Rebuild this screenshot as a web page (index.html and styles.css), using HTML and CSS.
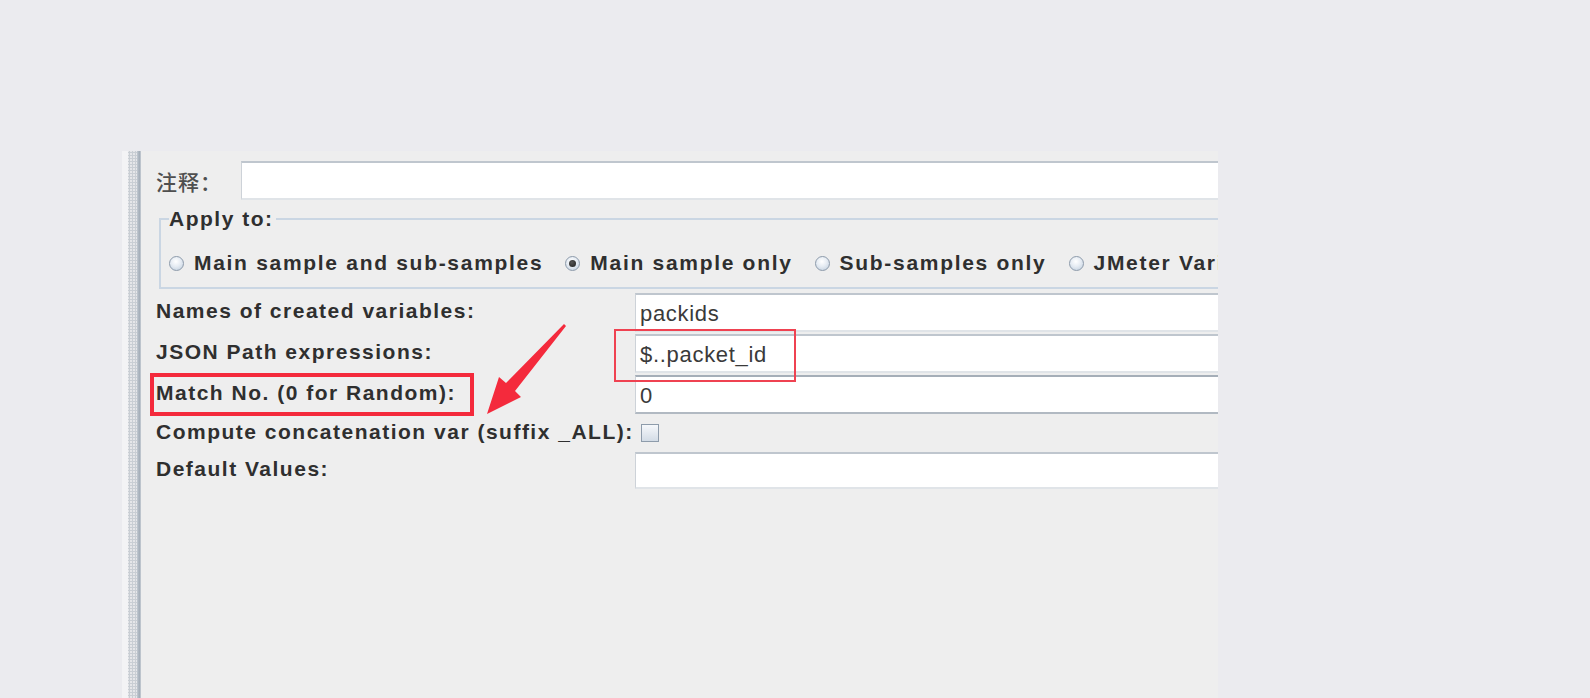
FILE: index.html
```html
<!DOCTYPE html>
<html lang="zh">
<head>
<meta charset="utf-8">
<title>JSON Extractor</title>
<link rel="stylesheet" href="styles.css">
</head>
<body>
<div class="panel">
  <div class="strip">
    <div class="strip-light"></div>
    <div class="strip-dots"></div>
    <div class="strip-line"></div>
  </div>
  <div class="content">
    <div class="comment-row">
      <span class="cn-label">注释：</span>
      <div class="field comment-field"></div>
    </div>
    <fieldset class="apply">
      <legend>Apply to:</legend>
      <div class="radios">
        <span class="radio"><span class="dot"></span><span class="rtext">Main sample and sub-samples</span></span>
        <span class="radio"><span class="dot on"></span><span class="rtext">Main sample only</span></span>
        <span class="radio"><span class="dot"></span><span class="rtext">Sub-samples only</span></span>
        <span class="radio"><span class="dot"></span><span class="rtext">JMeter Variable Name to use</span></span>
      </div>
    </fieldset>
    <div class="form-grid">
      <div class="lbl">Names of created variables:</div>
      <div class="field">packids</div>
      <div class="lbl">JSON Path expressions:</div>
      <div class="field">$..packet_id</div>
      <div class="lbl">Match No. (0 for Random):</div>
      <div class="field focused">0</div>
      <div class="lbl">Compute concatenation var (suffix _ALL):</div>
      <div class="check-cell"><span class="checkbox"></span></div>
      <div class="lbl">Default Values:</div>
      <div class="field"></div>
    </div>
  </div>
</div>
<div class="annot box-match"></div>
<div class="annot box-path"></div>
<svg class="annot arrow" width="1590" height="698" viewBox="0 0 1590 698">
  <polygon points="487,414 499,377 506,383 564,324 566,326 515,391 521,397" fill="#f42a3c"/>
</svg>
</body>
</html>
```

FILE: styles.css
```css
html, body {
  margin: 0;
  padding: 0;
}
body {
  background: #ebebef;
  width: 1590px;
  height: 698px;
  overflow: hidden;
  position: relative;
  font-family: "Liberation Sans", Arial, sans-serif;
  color: #333;
}
.panel {
  margin: 151px 0 0 122px;
  width: 1096px;
  height: 547px;
  background: #eeeeee;
  display: flex;
  overflow: hidden;
}
.strip {
  flex: 0 0 19px;
  display: flex;
}
.strip-light {
  width: 6px;
  background: #f3f3f5;
}
.strip-dots {
  width: 9px;
  background-color: #f2f2f3;
  background-image: radial-gradient(circle, #c9ced4 1px, transparent 1.6px);
  background-size: 3px 3px;
}
.strip-line {
  width: 4px;
  background: linear-gradient(to right, #c3cad2, #a3adb8 60%, #c9cfd6);
}
.content {
  flex: 0 0 1300px;
  padding: 10px 0 0 15px;
}
.comment-row {
  display: flex;
  align-items: center;
  height: 39px;
}
.cn-label {
  width: 85px;
  font-family: "Noto Sans CJK SC", sans-serif;
  font-size: 21px;
  color: #4f4f4f;
  font-weight: 500;
  letter-spacing: 1px;
}
.field {
  box-sizing: border-box;
  background: #fff;
  border-top: 2px solid #bfc6ce;
  border-bottom: 2px solid #e0e4e8;
  border-left: 1px solid #cdd2d8;
  font-size: 22px;
  letter-spacing: 0.7px;
  color: #3a3a3a;
  padding: 3px 0 0 4px;
  display: flex;
  align-items: center;
}
.comment-field {
  flex: 1;
  height: 39px;
}
.apply {
  margin: 7px 0 0 3px;
  border: 2px solid #cad6e3;
  padding: 0 0 11px 8px;
  min-width: 0;
}
.apply legend {
  font-size: 21px;
  font-weight: bold;
  line-height: 24px;
  letter-spacing: 1.5px;
  padding: 0 3px 0 0;
  color: #2f2f2f;
}
.radios {
  margin-top: 19px;
  display: flex;
  white-space: nowrap;
  height: 26px;
  align-items: center;
}
.radio {
  display: inline-flex;
  align-items: center;
  margin-right: 22px;
}
.dot {
  box-sizing: border-box;
  width: 15px;
  height: 15px;
  border: 1px solid #8d9bab;
  border-radius: 50%;
  background: radial-gradient(circle at 45% 35%, #ffffff 0, #e6ecf3 45%, #bccbdb 100%);
  margin-right: 10px;
  position: relative;
}
.dot.on::after {
  content: "";
  position: absolute;
  left: 3px;
  top: 3px;
  width: 7px;
  height: 7px;
  border-radius: 50%;
  background: radial-gradient(circle at 40% 35%, #555, #1e1e1e);
}
.rtext {
  font-size: 21px;
  font-weight: bold;
  letter-spacing: 1.7px;
  line-height: 26px;
  color: #2f2f2f;
}
.form-grid {
  margin-top: 3px;
  display: grid;
  grid-template-columns: 479px 1fr;
  grid-template-rows: 41px 41px 41px 36px 39px;
}
.lbl {
  font-size: 21px;
  font-weight: bold;
  letter-spacing: 1.5px;
  color: #2f2f2f;
  display: flex;
  align-items: center;
  white-space: nowrap;
  padding-bottom: 3px;
}
.form-grid .field {
  margin: 1px 0;
}
.form-grid .field.focused {
  border-top-color: #a5aeb8;
  border-bottom-color: #b1b9c2;
}
.check-cell {
  display: flex;
  align-items: center;
}
.checkbox {
  box-sizing: border-box;
  width: 18px;
  height: 18px;
  margin-left: 6px;
  border: 1px solid #8e9cab;
  background: linear-gradient(#f6f8fb, #d3dce6);
}
.annot {
  position: absolute;
}
.box-match {
  left: 150px;
  top: 373px;
  width: 316px;
  height: 35px;
  border: 4px solid #f42a3c;
}
.box-path {
  left: 614px;
  top: 329px;
  width: 178px;
  height: 49px;
  border: 2px solid #ef4251;
}
.arrow {
  left: 0;
  top: 0;
  pointer-events: none;
}
```
